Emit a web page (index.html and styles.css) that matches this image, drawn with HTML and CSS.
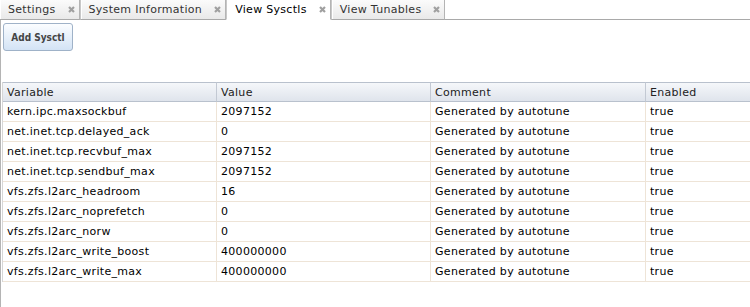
FILE: index.html
```html
<!DOCTYPE html>
<html lang="en">
<head>
  <meta charset="UTF-8">
  <title>View Sysctls</title>
  <link rel="stylesheet" href="styles.css">
</head>
<body>
  <div class="tabbar">
    <div class="tab">Settings <svg class="close" viewBox="0 0 7 7"><path d="M1 1L6 6M6 1L1 6"/></svg></div>
    <div class="tab">System Information <svg class="close" viewBox="0 0 7 7"><path d="M1 1L6 6M6 1L1 6"/></svg></div>
    <div class="tab active">View Sysctls <svg class="close" viewBox="0 0 7 7"><path d="M1 1L6 6M6 1L1 6"/></svg></div>
    <div class="tab">View Tunables <svg class="close" viewBox="0 0 7 7"><path d="M1 1L6 6M6 1L1 6"/></svg></div>
    <div class="tab-fill"></div>
  </div>

  <div class="panel">
    <div class="toolbar">
      <button class="btn">Add Sysctl</button>
    </div>

    <table class="grid">
      <colgroup>
        <col class="c-var">
        <col class="c-val">
        <col class="c-com">
        <col class="c-en">
      </colgroup>
      <thead>
        <tr><th>Variable</th><th>Value</th><th>Comment</th><th>Enabled</th></tr>
      </thead>
      <tbody>
        <tr><td>kern.ipc.maxsockbuf</td><td>2097152</td><td>Generated by autotune</td><td>true</td></tr>
        <tr><td>net.inet.tcp.delayed_ack</td><td>0</td><td>Generated by autotune</td><td>true</td></tr>
        <tr><td>net.inet.tcp.recvbuf_max</td><td>2097152</td><td>Generated by autotune</td><td>true</td></tr>
        <tr><td>net.inet.tcp.sendbuf_max</td><td>2097152</td><td>Generated by autotune</td><td>true</td></tr>
        <tr><td>vfs.zfs.l2arc_headroom</td><td>16</td><td>Generated by autotune</td><td>true</td></tr>
        <tr><td>vfs.zfs.l2arc_noprefetch</td><td>0</td><td>Generated by autotune</td><td>true</td></tr>
        <tr><td>vfs.zfs.l2arc_norw</td><td>0</td><td>Generated by autotune</td><td>true</td></tr>
        <tr><td>vfs.zfs.l2arc_write_boost</td><td>400000000</td><td>Generated by autotune</td><td>true</td></tr>
        <tr><td>vfs.zfs.l2arc_write_max</td><td>400000000</td><td>Generated by autotune</td><td>true</td></tr>
      </tbody>
    </table>
  </div>
</body>
</html>
```

FILE: styles.css
```css
body {
  margin: 0;
  font-family: 'DejaVu Sans', Verdana, sans-serif;
  font-size: 11px;
  letter-spacing: 0.3px;
  color: #000;
  background: #fff;
  overflow: hidden;
}

/* tabs */
.tabbar {
  display: flex;
  height: 20px;
}

.tab {
  display: flex;
  align-items: center;
  height: 19px;
  padding: 0 4px 0 8px;
  background: linear-gradient(#fbfbfb, #e9e9e9);
  border-right: 1px solid #b4b4b4;
  border-bottom: 1px solid #a9a9a9;
  box-shadow: inset 1px 0 0 #fff;
  color: #333;
  white-space: nowrap;
}

.tab + .tab {
  border-left: 1px solid #c8c8c8;
}

.tab.active {
  background: #fff;
  border-bottom-color: #fff;
  color: #000;
}

.tab-fill {
  flex: 1;
  border-bottom: 1px solid #a9a9a9;
}

.close {
  width: 7px;
  height: 7px;
  margin-left: 12px;
}

.close path {
  stroke: #a0a0a0;
  stroke-width: 2.2;
  fill: none;
}

/* panel */
.panel {
  border-left: 1px solid #b4b4b4;
  min-height: 287px;
}

.toolbar {
  padding: 3px 0 0 2px;
  height: 59px;
}

.btn {
  width: 70px;
  height: 28px;
  padding: 0;
  border: 1px solid #9fb2c8;
  border-radius: 3px;
  background: linear-gradient(#fbfdff, #d3e3f5);
  font-family: 'DejaVu Sans Condensed', 'DejaVu Sans', sans-serif;
  font-size: 10px;
  font-weight: bold;
  letter-spacing: 0;
  color: #444;
}

/* grid */
.grid {
  margin-left: 1px;
  width: 749px;
  table-layout: fixed;
  border-collapse: separate;
  border-spacing: 0;
  border-left: 1px solid #d6d6d6;
}

.c-var { width: 214px; }
.c-val { width: 214px; }
.c-com { width: 215px; }
.c-en { width: 105px; }

.grid th,
.grid td {
  padding: 0 0 0 4px;
  text-align: left;
  font-weight: normal;
  white-space: nowrap;
  overflow: hidden;
  vertical-align: middle;
}

.grid th {
  height: 18px;
  background: linear-gradient(#f5f7fa, #dfe4ec);
  border-top: 1px solid #b9c1cd;
  border-bottom: 1px solid #b9c1cd;
  border-right: 1px solid #c3c9d3;
  color: #222;
}

.grid td {
  height: 19px;
  border-bottom: 1px solid #eee4d7;
  border-right: 1px solid #eee4d7;
}
```
